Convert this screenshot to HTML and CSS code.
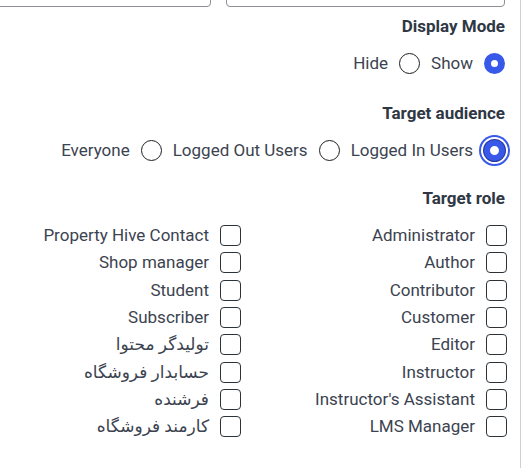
FILE: index.html
```html
<!DOCTYPE html>
<html lang="fa">
<head>
  <meta charset="UTF-8">
  <meta name="viewport" content="width=device-width, initial-scale=1.0">
  <title>تنظیمات نمایش</title>
  <link rel="stylesheet" href="styles.css">
</head>
<body>
  <div class="panel" dir="rtl">
    <!-- فیلدهای بالای فرم (بخشی از آن بیرون از دید است) -->
    <div class="fields-row">
      <input type="text" class="text-field">
      <input type="text" class="text-field">
    </div>

    <div class="section section-mode">
      <h3 class="section-title">Display Mode</h3>
      <div class="options">
        <label class="option"><input type="radio" name="mode" checked> <span>Show</span></label>
        <label class="option"><input type="radio" name="mode"> <span>Hide</span></label>
      </div>
    </div>

    <div class="section section-audience">
      <h3 class="section-title">Target audience</h3>
      <div class="options">
        <label class="option"><input type="radio" name="audience" class="focused" checked> <span>Logged In Users</span></label>
        <label class="option"><input type="radio" name="audience"> <span>Logged Out Users</span></label>
        <label class="option"><input type="radio" name="audience"> <span>Everyone</span></label>
      </div>
    </div>

    <div class="section section-role">
      <h3 class="section-title">Target role</h3>
      <div class="roles">
        <label class="option"><input type="checkbox"> <span>Administrator</span></label>
        <label class="option"><input type="checkbox"> <span>Author</span></label>
        <label class="option"><input type="checkbox"> <span>Contributor</span></label>
        <label class="option"><input type="checkbox"> <span>Customer</span></label>
        <label class="option"><input type="checkbox"> <span>Editor</span></label>
        <label class="option"><input type="checkbox"> <span>Instructor</span></label>
        <label class="option"><input type="checkbox"> <span>Instructor's Assistant</span></label>
        <label class="option"><input type="checkbox"> <span>LMS Manager</span></label>
        <label class="option"><input type="checkbox"> <span>Property Hive Contact</span></label>
        <label class="option"><input type="checkbox"> <span>Shop manager</span></label>
        <label class="option"><input type="checkbox"> <span>Student</span></label>
        <label class="option"><input type="checkbox"> <span>Subscriber</span></label>
        <label class="option"><input type="checkbox"> <span>تولیدگر محتوا</span></label>
        <label class="option"><input type="checkbox"> <span>حسابدار فروشگاه</span></label>
        <label class="option"><input type="checkbox"> <span>فرشنده</span></label>
        <label class="option"><input type="checkbox"> <span>کارمند فروشگاه</span></label>
      </div>
    </div>
  </div>
</body>
</html>
```

FILE: styles.css
```css
/* Layout general */
body {
  margin: 0;
  height: 468px;
  overflow: hidden;
  background: #fff;
  font-family: Roboto, "DejaVu Sans", sans-serif;
  font-size: 17px;
  color: #3c4350;
}

/* Panel with the light border on the right */
.panel {
  width: 521px;
  height: 100%;
  box-sizing: border-box;
  border-right: 1px solid #d0d0d3;
  padding-right: 15px;
  overflow: hidden;
}

/* Top inputs, scrolled mostly out of view */
.fields-row {
  display: flex;
  gap: 15px;
  margin-top: -25px;
}

.text-field {
  flex: none;
  width: 279px;
  height: 32px;
  box-sizing: border-box;
  border: 1px solid #8c8f94;
  border-radius: 4px;
  background: #fff;
}

/* Sections */
.section-mode {
  margin-top: 7px;
}

.section-audience {
  margin-top: 27px;
}

.section-role {
  margin-top: 25px;
}

.section-title {
  margin: 0 0 15px;
  font-size: 17px;
  line-height: 24px;
  font-weight: 700;
  color: #2f3744;
}

/* Rows of radio buttons */
.options {
  display: flex;
  gap: 11px;
  height: 21px;
  align-items: center;
}

.option {
  display: flex;
  align-items: center;
  gap: 11px;
  line-height: 21px;
  white-space: nowrap;
}

/* Radio buttons */
input[type="radio"],
input[type="checkbox"] {
  appearance: none;
  -webkit-appearance: none;
  margin: 0;
  flex: none;
  width: 21px;
  height: 21px;
  box-sizing: border-box;
  border: 1px solid #1e1e1e;
  background: #fff;
}

input[type="radio"] {
  border-radius: 50%;
}

input[type="radio"]:checked {
  border: 7px solid #3858e9;
}

input[type="radio"].focused {
  border-width: 6px;
  box-shadow: 0 0 0 1px #2a3a9a, 0 0 0 3px #fff, 0 0 0 5px #3858e9;
}

/* Checkbox grid for roles */
.roles {
  display: grid;
  grid-template-columns: repeat(2, 266px);
  grid-template-rows: repeat(8, 21px);
  grid-auto-flow: column;
  row-gap: 6.35px;
  margin-right: -2px;
}

input[type="checkbox"] {
  border-radius: 4px;
  border-color: #2c3338;
}
```
